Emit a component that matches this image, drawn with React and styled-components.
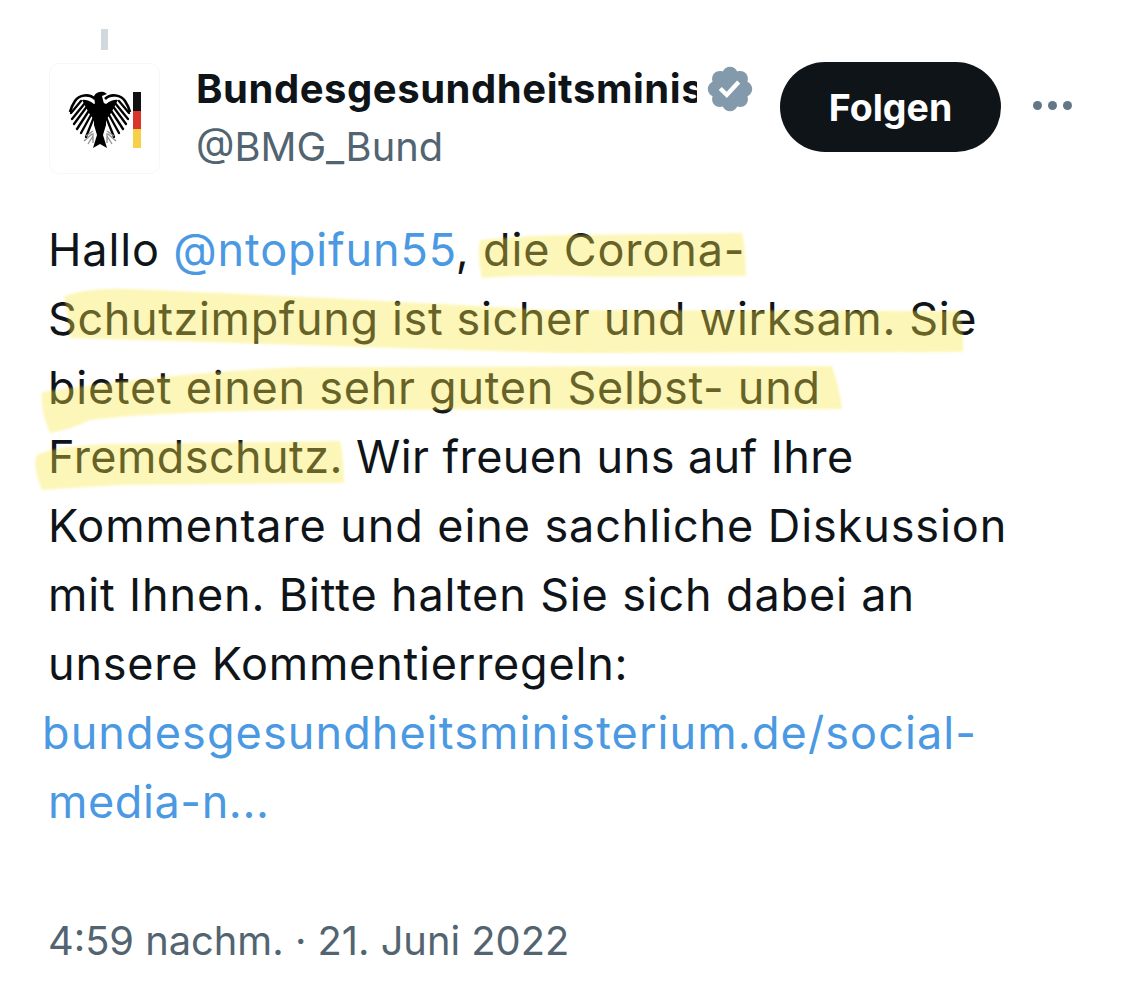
import styled, { createGlobalStyle } from "styled-components"

const GlobalStyle = createGlobalStyle`
html, body {
    margin: 0;
    padding: 0;
    background: #fff;
}
`

const Page = styled.div`
    position: relative;
    width: 1125px;
    height: 1007px;
    box-sizing: border-box;
    padding: 29px 49px 0;
    overflow: hidden;
    background: #fff;
    color: #0f1419;
    font-family: Inter, "Liberation Sans", sans-serif;
`
const Thread = styled.div`
    width: 7px;
    height: 21px;
    margin-left: 52px;
    margin-bottom: 13px;
    background: #cfd9de;
`
const Header = styled.header`
    display: flex;
    align-items: flex-start;
`
const Avatar = styled.div`
    width: 111px;
    height: 111px;
    flex: none;
    box-sizing: border-box;
    border: 1px solid #f7f7f7;
    border-radius: 10px;
`
const Names = styled.div`
    margin-left: 36px;
    width: 560px;
    flex: none;
`
const NameRow = styled.div`
    display: flex;
    align-items: center;
    height: 52px;
`
const Name = styled.div`
    width: 502px;
    overflow: hidden;
    white-space: nowrap;
    font-size: 40px;
    letter-spacing: 0.55px;
    font-weight: 700;
    line-height: 52px;
`
const Badge = styled.svg`
    width: 52px;
    height: 52px;
    margin-left: 7px;
    flex: none;
    fill: #829aab;
`
const Handle = styled.div`
    font-size: 39.8px;
    line-height: 46px;
    margin-top: 9px;
    color: #536471;
`
const FollowButton = styled.button`
    width: 221px;
    height: 90px;
    margin-top: -1px;
    margin-left: 24px;
    flex: none;
    border: 0;
    border-radius: 45px;
    background: #0f1419;
    color: #fff;
    font-family: inherit;
    font-size: 37.5px;
    font-weight: 700;
`
const More = styled.div`
    display: flex;
    gap: 6px;
    margin-left: 32px;
    margin-top: 38px;
`
const Dot = styled.span`
    width: 9px;
    height: 9px;
    border-radius: 50%;
    background: #647786;
`
const Tweet = styled.div`
    margin-top: 41px;
    margin-left: -1px;
    font-size: 45px;
    line-height: 69px;
    white-space: nowrap;
`
const Line = styled.div`
    height: 69px;
    letter-spacing: ${props => props.$track ?? 0.85}px;
    margin-left: ${props => props.$shift || 0}px;
`
const Link = styled.span`
    color: #4a99e2;
`
const Time = styled.div`
    margin-top: 70px;
    margin-left: -1px;
    font-size: 39.8px;
    line-height: 69px;
    color: #536471;
    white-space: nowrap;
`
const Marker = styled.svg`
    position: absolute;
    top: 0;
    left: 0;
    pointer-events: none;
`

const wingFeathers = [
    "M32 38 L22 50", "M36 40 L23 56", "M39 42 L25 61", "M41 46 L28 66", "M43 50 L32 70", "M45 54 L37 74",
]

const EagleHalf = () => (
    <>
        <path d="M45 41 Q38 36 33 37 L40 50 L45 57 Z" fill="#000" />
        <path d="M46 36 C40 30 30 32 26 38 C24 41 22 45 21 49" fill="none" stroke="#000" strokeWidth="2.6" />
        {wingFeathers.map((d, i) => (
            <path key={i} d={d} fill="none" stroke="#000" strokeWidth="2.3" strokeLinecap="round" />
        ))}
        <path d="M44 68 L37 73 M43 71 L35 78 M44 73 L39 81 M44 70 L44 80" fill="none" stroke="#8f8f8f" strokeWidth="1.3" />
    </>
)

const Eagle = () => (
    <svg width="109" height="109" viewBox="1 1 109 109" aria-hidden="true">
        <EagleHalf />
        <g transform="translate(102 0) scale(-1 1)">
            <EagleHalf />
        </g>
        <path d="M45 41 Q51 37 57 41 L57 62 L54 72 L58 85 L51 81 L44 85 L48 72 L45 62 Z" fill="#000" />
        <path d="M46 41 L45 33 Q48 28 55 29 L58 31 L53 33 L55 41 Z" fill="#000" />
        <rect x="84" y="29" width="8" height="19" fill="#111" />
        <rect x="84" y="48" width="8" height="18" fill="#d8352b" />
        <rect x="84" y="66" width="8" height="19" fill="#f7d04a" />
    </svg>
)

// highlighter strokes drawn by hand over the tweet
const strokes = [
    "M480 240 Q520 236 560 235 L742 233 Q746 250 746 276 L600 277 Q530 274 482 278 Q477 258 480 240 Z",
    "M64 296 Q90 287 130 289 Q300 296 550 310 L960 311 Q964 335 963 352 L560 353 Q300 345 70 338 Q68 315 64 296 Z",
    "M42 392 Q180 372 300 367 L832 366 Q840 390 842 409 L300 410 Q150 412 90 420 Q70 430 50 433 Q40 410 42 392 Z",
    "M36 456 Q50 446 110 444 L340 441 Q344 460 344 483 Q200 484 120 485 Q70 488 42 490 Q33 470 36 456 Z",
]

const App = () => {
    return (
        <Page>
            <GlobalStyle />
            <Thread />
            <Header>
                <Avatar><Eagle /></Avatar>
                <Names>
                    <NameRow>
                        <Name>Bundesgesundheitsministerium</Name>
                        <Badge viewBox="0 0 24 24" aria-hidden="true">
                            <path d="M22.25 12c0-1.43-.88-2.67-2.19-3.34.46-1.39.2-2.9-.81-3.91s-2.52-1.27-3.91-.81c-.66-1.31-1.91-2.19-3.34-2.19s-2.67.88-3.33 2.19c-1.4-.46-2.91-.2-3.92.81s-1.26 2.52-.8 3.91c-1.31.67-2.2 1.91-2.2 3.34s.89 2.67 2.2 3.34c-.46 1.39-.21 2.9.8 3.91s2.52 1.26 3.91.81c.67 1.31 1.91 2.19 3.34 2.19s2.68-.88 3.34-2.19c1.39.45 2.9.2 3.91-.81s1.27-2.52.81-3.91c1.31-.67 2.19-1.91 2.19-3.34zm-11.71 4.2L6.8 12.46l1.41-1.42 2.26 2.26 4.8-5.23 1.47 1.36-6.2 6.77z" />
                        </Badge>
                    </NameRow>
                    <Handle>@BMG_Bund</Handle>
                </Names>
                <FollowButton>Folgen</FollowButton>
                <More><Dot /><Dot /><Dot /></More>
            </Header>
            <Tweet>
                <Line>Hallo <Link>@ntopifun55</Link>, die Corona-</Line>
                <Line $track={0.62}>Schutzimpfung ist sicher und wirksam. Sie</Line>
                <Line $track={0.73}>bietet einen sehr guten Selbst- und</Line>
                <Line $track={0.42}>Fremdschutz. Wir freuen uns auf Ihre</Line>
                <Line $track={0.9}>Kommentare und eine sachliche Diskussion</Line>
                <Line>mit Ihnen. Bitte halten Sie sich dabei an</Line>
                <Line $track={0.78}>unsere Kommentierregeln:</Line>
                <Line $shift={-6} $track={1.1}><Link>bundesgesundheitsministerium.de/social-</Link></Line>
                <Line $track={0.6}><Link>media-n...</Link></Line>
            </Tweet>
            <Time>4:59 nachm. · 21. Juni 2022</Time>
            <Marker width="1125" height="1007" viewBox="0 0 1125 1007" aria-hidden="true">
                <filter id="soft"><feGaussianBlur stdDeviation="1.2" /></filter>
                <g fill="rgb(250,231,63)" fillOpacity="0.37" filter="url(#soft)">
                    {strokes.map((d, i) => <path key={i} d={d} />)}
                </g>
            </Marker>
        </Page>
    )
}

export default App
